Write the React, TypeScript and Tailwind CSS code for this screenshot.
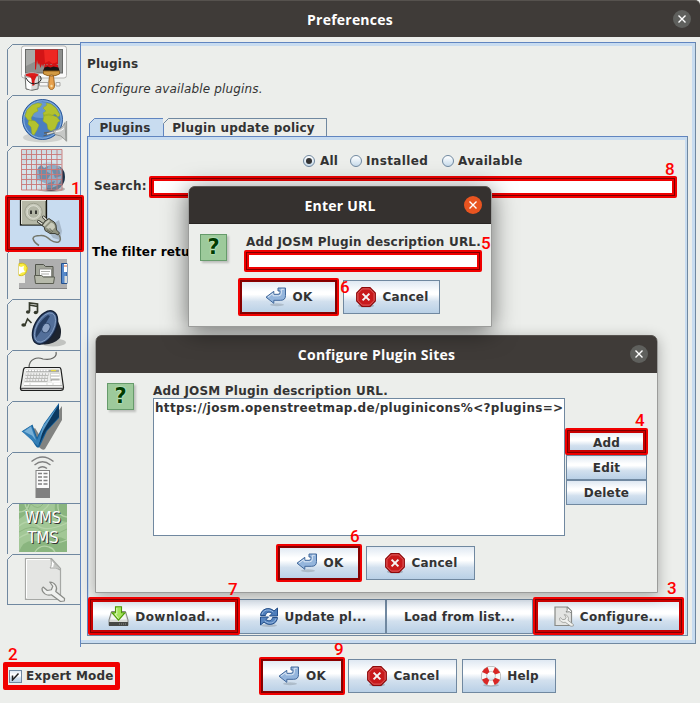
import type { ReactNode } from "react";

const face = "font-['DejaVu_Sans',sans-serif] font-bold text-[12px] leading-[16px] text-[#333] whitespace-nowrap";
const bold = `${face} tracking-[0.2px]`;
const gradient = "bg-[linear-gradient(180deg,#dfe8f2_0%,#ffffff_34%,#ffffff_42%,#d2e0ee_64%,#b9d0e6_100%)]";

function GridGlobe() {
  return (
    <>
      <ellipse cx="51" cy="189" rx="14" ry="3" fill="#000" opacity=".25" />
      <circle cx="51" cy="177" r="14" fill="#1d344b" />
      <circle cx="49" cy="175" r="13" fill="#6c8fae" />
      <path d="M38 168l6-5 5 2-3 6 5 3-4 6-7-1zM52 170l7-2 2 8-6 2zM48 183l7-2-3 7-5 0z" fill="#2d5075" />
      <rect x="21.500" y="149.500" width="40.500" height="40.500" fill="#b4c8d8" opacity=".5" />
      <path d="M22 165l8-6 5 4-4 7 3 5-5 3-7-5zM38 151l6 4 7-3 10 6v9l-9-3-8 4-7-8zM24 180l8 5 6-5 9 4v6H22z" fill="#dce9f0" opacity=".7" />
      <path d="M21.500 149.500h40.500v40.500h-40.500zM26.500 150v40M31.500 150v40M36.500 150v40M41.500 150v40M46.500 150v40M51.500 150v40M57 150v40M21.500 154.500h40M21.500 159.500h40M21.500 164.500h40M21.500 169.500h40M21.500 174.500h40M21.500 179.500h40M21.500 184.500h40" fill="none" stroke="#c97878" strokeWidth="1" opacity=".9" />
    </>
  );
}

function Wrench({ transform }: { transform?: string }) {
  return (
    <path
      transform={transform}
      d="M0 7.500a6.500 6.500 0 0 0 8.500 6.300l8.300 6.700 3.500-.500.200-2.500-8-7A6.500 6.500 0 0 0 7 1l2.800 4.200-1.300 3.500-3.700.800L1 6z"
      fill="#f0f1ef"
      stroke="#8a8c88"
      strokeWidth="1.100"
      strokeLinejoin="round"
    />
  );
}

const sideIcons: { top: number; art: ReactNode }[] = [
  {
    top: 45,
    art: (
      <>
        <rect x="21.500" y="46" width="45" height="32" rx="2.500" fill="#fafafa" stroke="#b5b5b3" />
        <rect x="25.500" y="49.500" width="37" height="23.500" fill="#8e908e" stroke="#686a68" />
        <path d="M26 50h33L26 66z" fill="#a9aba9" />
        <path d="M35 49.500h23v14.500h-14l-1 3-1-3-1.500 4-1.500-5-1 2-1-5-1 9-1 1z" fill="#d31416" />
        <path d="M44 50h13v12l-4 2-4-3-4 2z" fill="#ee2622" />
        <path d="M45 63l2 2 2-2 2 2 3-2 4 2 .500 6H43.500z" fill="#d31416" />
        <path d="M44.500 67.500l3-1 3 1 3-1 5 1 1 3.500H43z" fill="#171515" />
        <path d="M43.500 71h16v3q-5 3-8 1-3 2-8-1z" fill="#d39a43" stroke="#8c5b19" strokeWidth=".9" />
        <path d="M49.500 76h4l1 9q0 4.500-3 4.500T48.500 85z" fill="#e7a04c" stroke="#97601d" strokeWidth=".9" />
        <circle cx="51.500" cy="86" r="1.200" fill="#f8dda4" />
        <path d="M39.500 82.500h8.500v3.500h-8.500zM56 82.500h4v3.500h-4z" fill="#f6f6f6" stroke="#a8a8a6" />
        <path d="M25 75l1 14q6 2.500 12 0l1-14z" fill="#d8d9d7" stroke="#6c6e6c" />
        <path d="M26 78l.8 10q2 1.500 4.500 1.800V78z" fill="#fff" />
        <ellipse cx="32" cy="75" rx="7" ry="2.400" fill="#de1b1b" stroke="#b5b5b5" />
        <path d="M29.500 76h7l-2 5v4l-2 1-1-7z" fill="#d71717" />
        <path d="M26 78q4 8 12 5 5-3 2-7" fill="none" stroke="#222" />
      </>
    ),
  },
  {
    top: 96,
    art: (
      <>
        <ellipse cx="43" cy="137.500" rx="20" ry="5" fill="#000" opacity=".12" />
        <circle cx="42.500" cy="119.500" r="20" fill="#4a7ec0" stroke="#2c5a9c" />
        <circle cx="42.500" cy="119.500" r="18.700" fill="none" stroke="#8db4e2" strokeWidth="1" />
        <ellipse cx="41" cy="110" rx="14" ry="8" fill="#7ba6db" opacity=".6" />
        <path d="M25 116l2-6 5-5 6-2 4 1-2 3-3 1 1 3-4 2-3 5 1 3-4-1zM29 120l6 1 4 4-2 5-3 5-2-1-1-7-3-3zM43 108l4-3-1-2 5 1 5 4 4 7-2 2-3-3-4 2-2-1-5 1-1-3 3-2zM44 115l5-1 8 3 3 4-2 1-3 7-4 2-3-2-1-5-4-3z" fill="#b3c22e" stroke="#92a823" strokeWidth=".5" />
        <path d="M43.500 136l13-4M44 133l10-1" stroke="#5e605e" strokeWidth="1.300" />
        <path d="M47 134l7-2" stroke="#d4d6d4" strokeWidth="1.500" />
        <path d="M53 130.500q9-.500 12-8l1 18q-5-6-11-6z" fill="#c6c8c6" stroke="#868986" strokeWidth=".8" />
        <path d="M66.500 121v20.500" stroke="#9c9f9c" strokeWidth="1.300" />
        <path d="M56 131.500q5 0 8-3" stroke="#fff" fill="none" />
      </>
    ),
  },
  { top: 147, art: <GridGlobe /> },
  {
    top: 198,
    art: (
      <>
        <rect x="20.500" y="199.500" width="26" height="25.500" fill="#b6b8a7" stroke="#151613" strokeWidth="1.300" />
        <path d="M21.500 224V200.500H46" stroke="#e5e6db" fill="none" />
        <path d="M45.500 201v23.500H22" stroke="#777a69" fill="none" />
        <circle cx="33.500" cy="212" r="8.700" fill="#c7c9ba" stroke="#9c9f8e" />
        <circle cx="33.500" cy="212" r="6.300" fill="#b2b5a5" stroke="#e2e3d8" strokeWidth=".8" />
        <path d="M31 210.500v3.500M36 210.500v3.500" stroke="#111" strokeWidth="1.500" />
        <path d="M46 228l13-8 3 11-2 9-7-2z" fill="#000" opacity=".16" />
        <path d="M59 235q3 5-.500 7-4 1-8-2-5-5-10-4.500-7 0-7.500 3 1 4 6 7" fill="none" stroke="#73766a" strokeWidth="1.500" />
        <path d="M38.500 221.500l5 3.500M43.500 217l4 4" stroke="#34352e" strokeWidth="3" strokeLinecap="round" />
        <path d="M38.500 221.500l5 3.500M43.500 217l4 4" stroke="#e8e9de" strokeWidth="1.300" strokeLinecap="round" />
        <path d="M42 225.500q2-5 7-7l2 1.500q4 1.500 5 5l.500 5 3 3-1.500 2-3-1.500h-5l-5-3-1-4z" fill="#8e917f" stroke="#34362d" strokeWidth=".9" />
        <path d="M43 225.500q2-4 6-6l1 1.500-5.500 5.500zM46 227.500l5-5q4 1 4 5l-3 3z" fill="#c9cbbb" />
        <path d="M49.500 228l3.500 4M47 230l5 3" stroke="#5c5e52" strokeWidth=".8" />
      </>
    ),
  },
  {
    top: 249,
    art: (
      <>
        <rect x="19" y="259" width="48" height="30" fill="#afafaf" />
        <path d="M19 288.500h48" stroke="#828282" />
        <path d="M19 275h6v8h-6z" fill="#ecece8" />
        <path d="M19 263.500q4-1 6.500 1 3 3 1 7-2 5-7.500 4z" fill="#f8ed43" stroke="#d5bf21" />
        <path d="M19 266l2 1 3-1-.500 3 1.500 3-3 .500-3 2z" fill="#fff" />
        <path d="M35.500 264.500h8l2 2H53v15H35.500z" fill="#a3a69a" stroke="#50534a" />
        <path d="M39.500 269h12v8h-12z" fill="#fff" stroke="#8c8d88" />
        <path d="M41 271.500h9M41 274h8" stroke="#b0b1ad" />
        <path d="M34.500 275.500h7l2 1.500h11l-1 6.500h-18z" fill="#b6b9aa" stroke="#595c50" />
        <path d="M61.500 263.500H67v20h-5.500z" fill="#5689ca" stroke="#24508c" />
        <path d="M64 264h3v8h-3z" fill="#fff" />
        <path d="M64 266h3" stroke="#dc6d3b" />
        <path d="M64.500 276h2.500v7h-2.500z" fill="#dadcd9" />
      </>
    ),
  },
  {
    top: 300,
    art: (
      <>
        <ellipse cx="53" cy="342.500" rx="13" ry="4" fill="#000" opacity=".18" />
        <path d="M40 344q12 2 20-6 2-7 0-12l-5-12-12 16-5 12z" fill="#1d242f" />
        <ellipse cx="45" cy="327.500" rx="10.500" ry="18" transform="rotate(28 45 327.500)" fill="#415d88" stroke="#16233a" strokeWidth="1.500" />
        <ellipse cx="45" cy="327.500" rx="8.500" ry="16" transform="rotate(28 45 327.500)" fill="#536f9a" stroke="#8ea6c8" strokeWidth=".8" />
        <path d="M36 338q-2-13 12-23l2 1-7 12z" fill="#273d60" />
        <ellipse cx="46" cy="328" rx="3.800" ry="5" transform="rotate(28 46 328)" fill="#8ea3c4" stroke="#2b446a" />
        <path d="M29.500 311.500v-8.500l8 1v8.500M29.500 305l8 1.500" fill="none" stroke="#363a2c" strokeWidth="1.700" />
        <ellipse cx="28" cy="312" rx="2.100" ry="1.800" fill="#363a2c" />
        <ellipse cx="35.800" cy="312.500" rx="2.100" ry="1.800" fill="#363a2c" />
        <path d="M25 325l2.500-6 4 4" fill="none" stroke="#363a2c" strokeWidth="1.600" />
        <ellipse cx="23.700" cy="325" rx="2.400" ry="1.700" fill="#363a2c" />
      </>
    ),
  },
  {
    top: 351,
    art: (
      <>
        <path d="M29 368q0-7 5-9 4-2 9 0 7 1 10-1 4-2 3-6" fill="none" stroke="#60625f" strokeWidth="1.200" />
        <path d="M25.500 367.500H59.500q1 0 1.500 2l2.500 18q0 3-3 3H23q-3 0-2.500-3l3-18q.500-2 2-2z" fill="#ecedeb" stroke="#1e1f1e" strokeWidth="1.200" />
        <path d="M21 388.500h42.500" stroke="#555" strokeWidth="1.600" />
        <path d="M26 371h33M25.500 374.500h23M25 377.500h23M24.500 380.500h23" stroke="#a9aaa8" strokeWidth="2.600" />
        <path d="M26 370.500h23M25.500 374h23M25 377h23M24.500 380h23" stroke="#fff" strokeWidth="1.500" strokeDasharray="2.200 .700" />
        <path d="M50.500 373h9v8h-9z" fill="#b2b3b1" />
        <path d="M51 374.500h8.500M51 377.500h9M52 381.500h8M24 384h5M31 384h15M48 384h4M54 384h6" stroke="#fff" strokeWidth="1.800" />
        <path d="M24 385.500h38" stroke="#a4a5a3" strokeWidth=".8" />
        <path d="M51 370.500h5" stroke="#e9dc47" strokeWidth="1.300" />
      </>
    ),
  },
  {
    top: 402,
    art: (
      <>
        <path d="M24 433l9-6 5 8L60 405v14L43 448q-2 2-5-1z" fill="#000" opacity=".45" transform="translate(2 1)" />
        <path d="M21.500 431.500l11-7 4.500 13 7-14L59 403v15l-12 13-7 15q-2 4-5-1-6-11-13.500-13.500z" fill="#16629c" />
        <path d="M22 431.500l9.500-6 5.500 14.500 7-15L58 406l-12 20-8 20z" fill="#347fb7" />
        <path d="M24 431.500l7-5 2 6 3 8-4-5z" fill="#78b1d8" />
        <path d="M59 405v12l-13 14-7 14 4-15z" fill="#0b385f" />
        <path d="M43 426l14-19-11 19-6 11z" fill="#7cb5dc" opacity=".6" />
      </>
    ),
  },
  {
    top: 453,
    art: (
      <>
        <path d="M31.500 461.500q11-9 22 0M34.500 465q8-6.500 16 0M38 468.500q4.500-3.500 9 0" fill="none" stroke="#808080" strokeWidth="1.400" />
        <rect x="36" y="470.500" width="13.500" height="27" fill="#fafafa" stroke="#808080" />
        <rect x="36" y="488" width="13.500" height="10" fill="#808080" />
        <path d="M38 473.500h4M43.500 473.500h4M38 477h4M43.500 477h4M38 480.500h4M43.500 480.500h4M38 484h4M43.500 484h4" stroke="#808080" strokeWidth="1.500" />
      </>
    ),
  },
  {
    top: 504,
    art: (
      <>
        <rect x="19" y="504" width="48" height="48" fill="#a2c796" />
        <path d="M19 504h12q-4 11-12 15zM67 522q-14-1-12-18h12zM19 552q5-15 21-10 14-10 27-2v12z" fill="#8ab57f" />
        <path d="M19 526q10-8 18-1 8 8 30-2M25 504q3 12 13 9 8-3 11-9M19 538q15-10 25 0 9 8 23 2M35 552q5-8 14-5 4 1 6 5M58 504q-1 12 9 13M19 512q8 0 10-8" fill="none" stroke="#b4d3a8" strokeWidth="1.300" />
        <path d="M19 532q14-9 23-1 12 6 25-2M31 504q7 7 12 0" fill="none" stroke="#85ae7a" strokeWidth=".7" />
        <g fontFamily="DejaVu Sans, sans-serif" fontSize="15" textAnchor="middle">
          <text x="44" y="524" fill="#333" textLength="36" lengthAdjust="spacingAndGlyphs">WMS</text>
          <text x="43" y="523" fill="#fff" textLength="36" lengthAdjust="spacingAndGlyphs">WMS</text>
          <text x="44" y="544" fill="#333" textLength="31" lengthAdjust="spacingAndGlyphs">TMS</text>
          <text x="43" y="543" fill="#fff" textLength="31" lengthAdjust="spacingAndGlyphs">TMS</text>
        </g>
      </>
    ),
  },
  {
    top: 555,
    art: (
      <>
        <path d="M25.500 558.500h26l9 10v31h-35z" fill="#e4e5e3" stroke="#a6a8a5" strokeWidth="1.200" />
        <path d="M26.500 598V559.500H50" stroke="#fff" fill="none" />
        <path d="M51 559q1 7-1 9 7-1 10 2z" fill="#fff" stroke="#a6a8a5" />
        <path d="M54 563l5 5h-6z" fill="#c5c7c4" />
        <Wrench transform="translate(42 581) scale(1.100 1)" />
      </>
    ),
  },
];

function EnterIcon() {
  return (
    <svg width="22" height="20" viewBox="0 0 22 20">
      <ellipse cx="12" cy="17.800" rx="7" ry="1.500" fill="#000" opacity=".14" />
      <path d="M1 10.200L8.800 4.300v3h4.200q2 0 2-2V4l-2 0V1h7.500v7.500q0 4.800-4.800 4.800H8.800v3z" fill="#94b5dc" stroke="#41689b" strokeWidth="1" strokeLinejoin="round" />
      <path d="M3 10l5-3.500V8.800h5.500q2.800 0 2.800-2.500V2.300h2.500" fill="none" stroke="#dbe7f4" strokeWidth="1" />
    </svg>
  );
}

function CancelIcon() {
  return (
    <svg width="20" height="21" viewBox="0 0 20 21">
      <ellipse cx="10" cy="18.800" rx="8" ry="1.800" fill="#000" opacity=".2" />
      <path d="M6 .700h8L19.300 6v8L14 19.300H6L.700 14V6z" fill="#c8191b" stroke="#8e090a" strokeWidth="1.200" />
      <path d="M6.400 1.900h7.200L18.100 6.400v7.200l-4.500 4.500H6.400l-4.500-4.500V6.400z" fill="none" stroke="#e87575" strokeWidth=".8" />
      <path d="M6.600 6.600l6.800 6.800M13.400 6.600l-6.800 6.800" stroke="#f5f5f5" strokeWidth="2" />
    </svg>
  );
}

function DownloadIcon() {
  return (
    <svg width="21" height="21" viewBox="0 0 21 21">
      <path d="M3.500 5.500h14L20 14v5.500H1V14z" fill="#d8dad7" stroke="#858783" />
      <path d="M4.300 6.500h12.400l1.800 7h-16z" fill="#f4f5f3" />
      <path d="M1 16h19v4H1z" fill="#464846" />
      <path d="M11 18h7" stroke="#8b8d8a" strokeDasharray="1 1" />
      <path d="M7.500.700h6v6H17l-6.500 7.500L4 6.700h3.500z" fill="#a5e35d" stroke="#4e9a06" strokeWidth="1.100" />
      <path d="M8.800 2v6H7l3.500 4.500" fill="none" stroke="#dcf8bb" />
    </svg>
  );
}

function RefreshIcon() {
  return (
    <svg width="20" height="20" viewBox="0 0 20 20">
      <ellipse cx="10" cy="18.500" rx="8" ry="1.500" fill="#000" opacity=".15" />
      <path d="M1.500 8.500C2 1.500 10.500-.500 15 4l3.500-3v8h-8l2.500-2.500C10 4 7 5.500 6.500 8.500z" fill="#4d7dbb" stroke="#234e89" />
      <path d="M18.500 10.500c-.500 7-9 9-13.500 4.500l-3.500 3v-8h8L7 12.500c3 2.500 6 1 6.500-2z" fill="#5785c0" stroke="#234e89" />
      <path d="M3 7.500C4 3 10 1.300 14.300 5M17 11.500c-1 4.500-7 6.200-11.300 2.500" fill="none" stroke="#9dbce2" strokeWidth=".9" />
    </svg>
  );
}

function ConfigureIcon() {
  return (
    <svg width="20" height="21" viewBox="0 0 20 21">
      <path d="M1 1h12.500L17.500 5v14.500H1z" fill="#e3e4e2" stroke="#888a87" strokeWidth="1.200" />
      <path d="M13 1q1 4-1 5 4-1 5.500 1V5z" fill="#fff" stroke="#888a87" />
      <Wrench transform="translate(5.500 8) scale(.68 .6)" />
    </svg>
  );
}

function HelpIcon() {
  return (
    <svg width="20" height="21" viewBox="0 0 20 21">
      <ellipse cx="10" cy="19.200" rx="8" ry="1.500" fill="#000" opacity=".18" />
      <circle cx="10" cy="10" r="7" fill="none" stroke="#9a9a98" strokeWidth="6" />
      <circle cx="10" cy="10" r="7" fill="none" stroke="#f8f8f7" strokeWidth="5" />
      <circle cx="10" cy="10" r="7" fill="none" stroke="#d92725" strokeWidth="5.400" strokeDasharray="5.500 5.495" strokeDashoffset="-2.750" />
    </svg>
  );
}

function QuestionIcon() {
  return (
    <div className="flex size-[27px] shrink-0 items-center justify-center border border-[#669b6b] bg-[#9dca9b] font-['DejaVu_Sans',sans-serif] text-[21px] leading-none font-bold text-[#003c00] shadow-[2px_2px_2px_rgba(0,0,0,0.2)] [text-shadow:0_0_1px_#d9ffd9,0_0_2px_#d9ffd9]">
      ?
    </div>
  );
}

function Button({ className, icon, children }: { className: string; icon?: ReactNode; children: ReactNode }) {
  return (
    <button className={`flex shrink-0 items-center justify-center gap-[6px] border border-[#7088a0] ${gradient} ${bold} ${className}`}>
      {icon}
      <span>{children}</span>
    </button>
  );
}

function Close({ className }: { className: string }) {
  return (
    <div className={`absolute top-[9px] flex size-[18px] items-center justify-center rounded-full ${className}`}>
      <svg width="8" height="8" viewBox="0 0 8 8">
        <path d="M.500.500l7 7M7.500.500l-7 7" stroke="#fff" strokeWidth="1.400" />
      </svg>
    </div>
  );
}

function TitleBar({ title, className, close }: { title: string; className: string; close: string }) {
  return (
    <div className={`relative flex shrink-0 items-center justify-center font-['Open_Sans',sans-serif] text-[14px] font-bold tracking-[0.22px] text-white ${className}`}>
      <span>{title}</span>
      <Close className={close} />
    </div>
  );
}

function Notch({ fill, stroke }: { fill: string; stroke: string }) {
  return (
    <svg className="absolute -top-px -left-px" width="7" height="7" viewBox="0 0 7 7">
      <path d="M0 0h6L0 6z" fill="#eceeeb" />
      <path d="M.500 7V5.500l5-5H7L7 7z" fill={fill} />
      <path d="M.500 7V5.500l5-5H7" fill="none" stroke={stroke} />
    </svg>
  );
}

const tones = {
  field: ["border border-[#800000]", "border-2 border-[#f00000]"],
  button: ["border border-[#800000]", "border-2 border-[#c80000]"],
  dark: ["border border-[#800000]", "border border-[#8a0000]"],
  plain: ["border border-[#f00000]", "border-2 border-[#f00000]"],
};

function Mark({ box, children, label, tone }: { box: string; label: string; children: string; tone: keyof typeof tones }) {
  return (
    <>
      <div className={`pointer-events-none absolute rounded-[2px] border-2 border-[#f00000] ${box}`}>
        <div className={`size-full ${tones[tone][0]}`}>
          <div className={`size-full ${tones[tone][1]}`} />
        </div>
      </div>
      <span className={`absolute font-['Roboto',sans-serif] text-[17px] leading-[17px] font-medium text-[#ff0000] ${label}`}>{children}</span>
    </>
  );
}

function Radio({ checked, children, className }: { checked?: boolean; children: string; className: string }) {
  return (
    <label className={`flex items-center ${face} ${className}`}>
      <span className="flex size-[12px] items-center justify-center rounded-full border border-[#7088a0] bg-linear-to-b from-white to-[#c8dcec]">
        {checked && <span className="size-[6px] rounded-full bg-[#333]" />}
      </span>
      {children}
    </label>
  );
}

export default function App() {
  return (
    <div className="relative flex h-[703px] w-[700px] flex-col overflow-hidden bg-[#eceeeb]">
      <TitleBar title="Preferences" className="h-[37px] rounded-tr-[5px] border-t border-[#56524e] bg-[#3f3b38]" close="right-[9px] bg-[#5f605d]" />
      <div className="flex h-[610px] shrink-0 pt-[5px] pr-[5px] pl-[7px]">
        <nav className="flex w-[73px] shrink-0 flex-col pt-[2px]">
          {sideIcons.map((item, i) => (
            <div key={item.top} className={`relative h-[51px] shrink-0 border-t border-l border-[#7088a0] ${i === 3 ? "bg-[#c8dcf0]" : ""}`}>
              <svg className="block" width="72" height="50" viewBox={`8 ${item.top} 72 50`}>
                {item.art}
              </svg>
              <Notch fill={i === 3 ? "#c8dcf0" : "#eceeeb"} stroke="#7088a0" />
            </div>
          ))}
          <div className="-mt-px h-px bg-[#7088a0]" />
        </nav>
        <div className="flex flex-1 flex-col border-l border-[#6085c0]">
          <main className="flex h-[602px] shrink-0 flex-col border-t border-r border-b border-t-[#6085c0] border-r-[#7088a0] border-b-[#7088a0]">
            <div className="flex flex-1 flex-col border-t-[3px] border-r-[3px] border-b-[3px] border-[#c8dcf0] pr-[4px] pb-[4px] pl-[6px]">
              <h1 className={`mt-[10px] ${bold}`}>Plugins</h1>
              <p className="mt-[9px] pl-[4px] font-['DejaVu_Sans',sans-serif] text-[12px] leading-[16px] tracking-[0.15px] text-[#333] italic">Configure available plugins.</p>
              <div className="mt-[21px] flex h-[18px] items-stretch pl-[2px]">
                <div className={`relative flex w-[74px] items-center justify-center border-t border-l border-[#6085c0] bg-[#c8dcf0] pr-[3px] ${bold}`}>
                  <Notch fill="#c8dcf0" stroke="#6085c0" />
                  Plugins
                </div>
                <div className={`relative flex w-[164px] items-center justify-center border-t border-r border-l border-[#7088a0] border-l-[#6085c0] pr-[3px] ${bold}`}>
                  <Notch fill="#eceeeb" stroke="#7088a0" />
                  Plugin update policy
                </div>
              </div>
              <section className="flex flex-1 flex-col border border-[#7088a0] border-t-[#6085c0] border-l-[#6085c0]">
                <div className="flex flex-1 flex-col border-t-[3px] border-r-2 border-l border-[#c8dcf0] pr-px pl-px">
                  <div className="mt-[13px] flex h-[16px] pl-[213px]">
                    <Radio checked className="w-[47px] gap-[5px] tracking-[0.2px]">All</Radio>
                    <Radio className="w-[92px] gap-[4px] tracking-[0.35px]">Installed</Radio>
                    <Radio className="gap-[4px] tracking-[0.3px]">Available</Radio>
                  </div>
                  <div className="mt-[7px] flex h-[20px] items-center pl-[4px]">
                    <span className={`w-[57px] ${bold}`}>Search:</span>
                    <div className="h-[18px] flex-1 border border-[#7088a0] bg-white" />
                    <div className="w-[7px]" />
                  </div>
                  <p className={`mt-[48px] pl-[2px] text-black! ${bold}`}>The filter retu</p>
                  <div className="mt-auto mb-px flex h-[35px]">
                    <Button className="w-[149px] tracking-[0.45px]!" icon={<DownloadIcon />}>Download...</Button>
                    <Button className="w-[147px]" icon={<RefreshIcon />}>Update pl...</Button>
                    <Button className="w-[147px]">Load from list...</Button>
                    <Button className="w-[151px] tracking-[0.3px]!" icon={<ConfigureIcon />}>Configure...</Button>
                  </div>
                </div>
              </section>
            </div>
          </main>
        </div>
      </div>
      <footer className="flex items-center pt-[12px] pl-[9px]">
        <label className={`flex w-[253px] items-center gap-[4px] ${bold}`}>
          <span className={`flex size-[13px] items-center justify-center border border-[#7088a0] ${gradient}`}>
            <svg width="9" height="9" viewBox="0 0 9 9">
              <path d="M1.500 3.500v4.500L7.500 1.500" fill="none" stroke="#222" strokeWidth="1.500" />
            </svg>
          </span>
          Expert Mode
        </label>
        <Button className="mr-[5px] h-[34px] w-[81px] pr-px" icon={<EnterIcon />}>OK</Button>
        <Button className="mr-[5px] h-[34px] w-[109px] pl-[2px]" icon={<CancelIcon />}>Cancel</Button>
        <Button className="h-[34px] w-[94px] pl-[2px]" icon={<HelpIcon />}>Help</Button>
      </footer>

      <Mark tone="field" box="left-[149px] top-[176px] h-[22px] w-[528px]" label="left-[665px] top-[161px]">8</Mark>

      <div className="absolute top-[335px] left-[95px] flex h-[258px] w-[563px] flex-col rounded-t-[7px] border border-[#9b9c9a] bg-[#eceeeb] shadow-[0_3px_14px_rgba(0,0,0,0.3)]">
        <TitleBar title="Configure Plugin Sites" className="-mt-px h-[38px] rounded-t-[6px] border-t border-[#56524e] bg-[#3f3b38]" close="right-[9px] bg-[#5f605d]" />
        <div className="flex pt-[10px] pl-[11px]">
          <QuestionIcon />
          <div className="ml-[19px] flex w-[412px] flex-col">
            <span className={bold}>Add JOSM Plugin description URL.</span>
            <div className={`-mt-px h-[138px] border border-[#7088a0] bg-white pt-px pl-px tracking-[0.32px] ${face}`}>https://josm.openstreetmap.de/pluginicons%&lt;?plugins=&gt;</div>
          </div>
          <div className="ml-px flex w-[81px] flex-col pt-[47px]">
            <Button className="h-[25px]">Add</Button>
            <Button className="h-[25px]">Edit</Button>
            <Button className="h-[25px]">Delete</Button>
          </div>
        </div>
        <div className="flex gap-[5px] pt-[10px] pl-[183px]">
          <Button className="h-[34px] w-[82px] pr-px" icon={<EnterIcon />}>OK</Button>
          <Button className="h-[34px] w-[109px] pl-[2px]" icon={<CancelIcon />}>Cancel</Button>
        </div>
      </div>

      <div className="absolute top-[186px] left-[188px] flex h-[141px] w-[304px] flex-col rounded-t-[7px] border border-[#9b9c9a] bg-[#eceeeb] shadow-[0_4px_24px_rgba(0,0,0,0.55)]">
        <TitleBar title="Enter URL" className="-mt-px h-[38px] rounded-t-[6px] border-t border-b border-t-[#5a5653] border-b-[#282523] bg-[#35312f]" close="right-[9px] bg-[#e95420]" />
        <div className="flex pt-[10px] pl-[11px]">
          <QuestionIcon />
          <div className="ml-[19px] flex flex-col">
            <span className={bold}>Add JOSM Plugin description URL.</span>
            <div className="mt-px h-[19px] w-[234px] border border-[#7088a0] bg-white" />
          </div>
        </div>
        <div className="flex gap-[5px] pt-[10px] pl-[52px]">
          <Button className="h-[34px] w-[97px] pr-[2px]" icon={<EnterIcon />}>OK</Button>
          <Button className="h-[34px] w-[97px] pl-[2px]" icon={<CancelIcon />}>Cancel</Button>
        </div>
      </div>

      <Mark tone="button" box="left-[5px] top-[195px] h-[57px] w-[79px]" label="left-[71px] top-[180px]">1</Mark>
      <Mark tone="plain" box="left-[3px] top-[662px] h-[28px] w-[117px]" label="left-[8px] top-[646px]">2</Mark>
      <Mark tone="button" box="left-[533px] top-[597px] h-[38px] w-[151px]" label="left-[667px] top-[580px]">3</Mark>
      <Mark tone="button" box="left-[565px] top-[428px] h-[27px] w-[83px]" label="left-[635px] top-[412px]">4</Mark>
      <Mark tone="field" box="left-[244px] top-[250px] h-[22px] w-[238px]" label="left-[481px] top-[235px]">5</Mark>
      <Mark tone="dark" box="left-[238px] top-[278px] h-[38px] w-[101px]" label="left-[340px] top-[279px]">6</Mark>
      <Mark tone="dark" box="left-[276px] top-[544px] h-[38px] w-[86px]" label="left-[350px] top-[528px]">6</Mark>
      <Mark tone="button" box="left-[88px] top-[597px] h-[38px] w-[152px]" label="left-[228px] top-[581px]">7</Mark>
      <Mark tone="dark" box="left-[259px] top-[657px] h-[38px] w-[86px]" label="left-[334px] top-[641px]">9</Mark>
    </div>
  );
}
